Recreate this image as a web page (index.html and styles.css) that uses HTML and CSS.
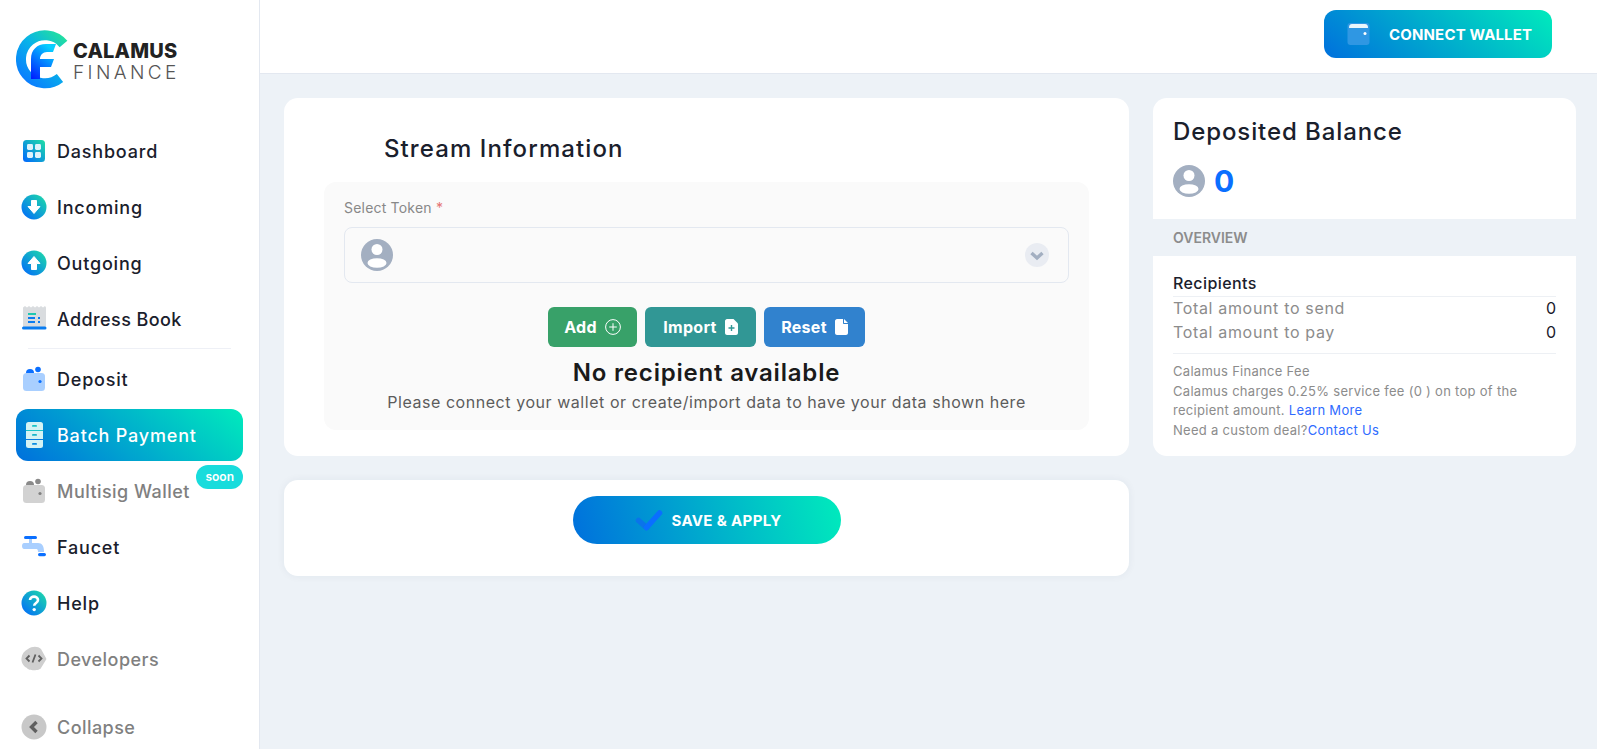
FILE: index.html
```html
<!DOCTYPE html>
<html lang="en">
<head>
    <meta charset="UTF-8">
    <meta name="viewport" content="width=device-width, initial-scale=1.0">
    <title>Calamus Finance - Batch Payment</title>
    <link rel="stylesheet" href="styles.css">
</head>
<body>
    <svg class="defs" width="0" height="0" aria-hidden="true">
        <defs>
            <linearGradient id="brand" x1="0" y1="1" x2="1" y2="0">
                <stop offset="0" stop-color="#0066ff"/>
                <stop offset="1" stop-color="#1fe0a5"/>
            </linearGradient>
            <linearGradient id="logoC" gradientUnits="userSpaceOnUse" x1="6" y1="50" x2="46" y2="6">
                <stop offset="0" stop-color="#0a7cff"/>
                <stop offset="0.55" stop-color="#08b4e8"/>
                <stop offset="1" stop-color="#22dfa0"/>
            </linearGradient>
            <linearGradient id="logoF" x1="0" y1="1" x2="0.6" y2="0">
                <stop offset="0" stop-color="#0018ff"/>
                <stop offset="1" stop-color="#06cfff"/>
            </linearGradient>
            <symbol id="avatar" viewBox="0 0 32 32">
                <circle cx="16" cy="16" r="16" fill="#a3afc1"/>
                <circle cx="16" cy="10.5" r="5.5" fill="#fff"/>
                <ellipse cx="16" cy="24" rx="9.5" ry="4.8" fill="#fff"/>
            </symbol>
        </defs>
    </svg>

    <div class="app">
        <aside class="sidebar">
            <div class="logo">
                <svg class="logo-mark" width="56" height="60" viewBox="0 0 56 60">
                    <path d="M47.5 15 A24 24 0 1 0 44 49" fill="none" stroke="url(#logoC)" stroke-width="10"/>
                    <path d="M15 50 V30 C15 21 21 15 30 15 H40 L37 23 H31 C27 23 24 26 24 30 H38 L35 38 H24 V50 Z" fill="url(#logoF)"/>
                </svg>
                <div class="logo-text">
                    <span class="logo-top">CALAMUS</span>
                    <span class="logo-bottom">FINANCE</span>
                </div>
            </div>

            <nav class="menu">
                <a class="menu-item">
                    <svg class="menu-icon" viewBox="0 0 26 26"><rect x="2" y="2" width="22" height="22" rx="3.5" fill="url(#brand)"/><rect x="6" y="6" width="6" height="6" rx="1.4" fill="#dff3fb"/><rect x="14" y="6" width="6" height="6" rx="1.4" fill="#dff3fb"/><rect x="6" y="14" width="6" height="6" rx="1.4" fill="#dff3fb"/><rect x="14" y="14" width="6" height="6" rx="1.4" fill="#dff3fb"/></svg>
                    <span>Dashboard</span>
                </a>
                <a class="menu-item">
                    <svg class="menu-icon" viewBox="0 0 26 26"><circle cx="13" cy="13" r="12.5" fill="url(#brand)"/><path d="M10.5 6.5 H15.5 V12.5 H19 L13 19.5 L7 12.5 H10.5 Z" fill="#fff" stroke="#fff" stroke-linejoin="round"/></svg>
                    <span>Incoming</span>
                </a>
                <a class="menu-item">
                    <svg class="menu-icon" viewBox="0 0 26 26"><circle cx="13" cy="13" r="12.5" fill="url(#brand)"/><path d="M10.5 19.5 H15.5 V13.5 H19 L13 6.5 L7 13.5 H10.5 Z" fill="#fff" stroke="#fff" stroke-linejoin="round"/></svg>
                    <span>Outgoing</span>
                </a>
                <a class="menu-item tight">
                    <svg class="menu-icon" viewBox="0 0 26 26"><path d="M2 1.5 L4 0 L6 1.5 L8 0 L10 1.5 L12 0 L14 1.5 L16 0 L18 1.5 L20 0 L22 1.5 L24 0 L25 1.5 V21 H2 Z" fill="#d9dcdf"/><rect x="1" y="20.5" width="24.5" height="3" rx="1.5" fill="#0a7cf0"/><rect x="7" y="7" width="8" height="2" fill="#1fc8b0"/><rect x="7" y="11" width="7" height="2" fill="#0a7cf0"/><rect x="7" y="15" width="7" height="2" fill="#0a7cf0"/><rect x="17" y="11" width="2" height="2" fill="#0a7cf0"/><rect x="17" y="15" width="2" height="2" fill="#0a7cf0"/></svg>
                    <span>Address Book</span>
                </a>
                <div class="menu-line"></div>
                <a class="menu-item">
                    <svg class="menu-icon" viewBox="0 0 26 26"><circle cx="9" cy="7" r="4" fill="#0a6fff"/><circle cx="17" cy="3.5" r="2.8" fill="#0a6fff"/><rect x="2" y="7" width="22" height="18" rx="3.5" fill="#a9cfff"/><circle cx="19" cy="15.5" r="1.6" fill="#0a6fff"/></svg>
                    <span>Deposit</span>
                </a>
                <a class="menu-item active">
                    <svg class="menu-icon" viewBox="0 0 26 26"><rect x="5" y="0" width="17" height="26" rx="2.5" fill="#d5f3f4"/><rect x="5" y="8" width="17" height="1" fill="#19c4c8"/><rect x="5" y="17" width="17" height="1" fill="#0a7ce0"/><rect x="11" y="3" width="5" height="1.8" rx="0.9" fill="#19c4c8"/><rect x="11" y="12" width="5" height="1.8" rx="0.9" fill="#19b4c8"/><rect x="11" y="21" width="5" height="1.8" rx="0.9" fill="#0a8ce0"/></svg>
                    <span>Batch Payment</span>
                </a>
                <a class="menu-item muted">
                    <svg class="menu-icon" viewBox="0 0 26 26"><circle cx="9" cy="7" r="4" fill="#8a8a8a"/><circle cx="17" cy="3.5" r="2.8" fill="#8a8a8a"/><rect x="2" y="7" width="22" height="18" rx="3.5" fill="#d2d2d2"/><circle cx="19" cy="15.5" r="1.6" fill="#808080"/></svg>
                    <span>Multisig Wallet</span>
                    <span class="badge">soon</span>
                </a>
                <a class="menu-item">
                    <svg class="menu-icon" viewBox="0 0 26 26"><rect x="3" y="2" width="13" height="3" rx="1.5" fill="#0a6fff"/><path d="M8 5 H11 V9 H17 C21 9 23 12 23 18 H17 C17 15 16 15 15 15 H3 C2 15 1 14 1 12 C1 10 2 9 3 9 H8 Z" fill="#a9cfff"/><rect x="17" y="19" width="8" height="3.2" rx="1.6" fill="#0a6fff"/></svg>
                    <span>Faucet</span>
                </a>
                <a class="menu-item">
                    <svg class="menu-icon" viewBox="0 0 26 26"><circle cx="13" cy="13" r="12.5" fill="url(#brand)"/><path d="M9 10 C9 5.5 17 5.5 17 10 C17 13 13.2 13 13.2 15.8" fill="none" stroke="#fff" stroke-width="2.6"/><circle cx="13.2" cy="19.6" r="1.7" fill="#fff"/></svg>
                    <span>Help</span>
                </a>
                <a class="menu-item muted">
                    <svg class="menu-icon" viewBox="0 0 26 26"><path d="M7 3 C11 0 17 0 20 3 L25.5 13 L20 22 C19 25 7 25 6 22 C2 20 0 16 0.5 12 C1 8 3 5 7 3 Z" fill="#cfcfcf"/><path d="M8.5 9.5 L5.5 12.5 L8.5 15.5 M17.5 9.5 L20.5 12.5 L17.5 15.5 M14.5 8.5 L11.5 16.5" fill="none" stroke="#5f5f5f" stroke-width="1.8"/></svg>
                    <span>Developers</span>
                </a>
                <a class="menu-item muted collapse">
                    <svg class="menu-icon" viewBox="0 0 26 26"><circle cx="13" cy="13" r="12.5" fill="#c8c8c8"/><path d="M15.5 8 L10.5 13 L15.5 18" fill="none" stroke="#5f5f5f" stroke-width="3.4"/></svg>
                    <span>Collapse</span>
                </a>
            </nav>
        </aside>

        <div class="main">
            <header class="topbar">
                <button class="grad-btn wallet-btn">
                    <svg width="24" height="24" viewBox="0 0 24 24"><rect x="0.5" y="1" width="22" height="22" rx="3" fill="#2f97e3"/><path d="M2 6 C2 3 3 2 5 2 H18 C20 2 21 3 21 6 Z" fill="#e9f6fb"/><circle cx="18" cy="11.5" r="1.5" fill="#fff"/></svg>
                    <span>CONNECT WALLET</span>
                </button>
            </header>

            <div class="content">
                <div class="left-col">
                    <section class="card stream-card">
                        <h2 class="stream-title">Stream Information</h2>
                        <div class="panel">
                            <label class="field-label">Select Token <em>*</em></label>
                            <div class="select-box">
                                <svg class="avatar" width="32" height="32"><use href="#avatar"/></svg>
                                <svg width="24" height="24" viewBox="0 0 24 24"><circle cx="12" cy="12" r="12" fill="#e9ecf2"/><path d="M6.5 10 L12 15 L17.5 10" fill="none" stroke="#a3afc1" stroke-width="3.4"/></svg>
                            </div>
                            <div class="actions">
                                <button class="btn btn-add">Add
                                    <svg width="16" height="16" viewBox="0 0 16 16"><circle cx="8" cy="8" r="7.4" fill="none" stroke="#fff" stroke-width="1"/><path d="M8 4.2 V11.8 M4.2 8 H11.8" stroke="#fff" stroke-width="1"/></svg>
                                </button>
                                <button class="btn btn-import">Import
                                    <svg width="13" height="16" viewBox="0 0 13 16"><path d="M2 0 H8.5 L13 4.5 V14 C13 15 12 16 11 16 H2 C1 16 0 15 0 14 V2 C0 1 1 0 2 0 Z" fill="#fff"/><path d="M6.5 6 V12 M3.5 9 H9.5" stroke="#319795" stroke-width="1.4"/></svg>
                                </button>
                                <button class="btn btn-reset">Reset
                                    <svg width="13" height="16" viewBox="0 0 13 16"><path d="M2 0 H8 V4 C8 4.6 8.4 5 9 5 H13 V14 C13 15 12 16 11 16 H2 C1 16 0 15 0 14 V2 C0 1 1 0 2 0 Z M9 0 L13 4 H9 Z" fill="#fff"/></svg>
                                </button>
                            </div>
                            <h3 class="empty-title">No recipient available</h3>
                            <p class="empty-text">Please connect your wallet or create/import data to have your data shown here</p>
                        </div>
                    </section>

                    <section class="card save-card">
                        <button class="grad-btn save-btn">
                            <svg width="28" height="22" viewBox="0 0 28 22"><path d="M3.5 11.5 L11.5 18.5" fill="none" stroke="#0a74ea" stroke-width="5.5" stroke-linecap="round"/><path d="M11.5 18.5 L24.5 4" fill="none" stroke="#0a6fff" stroke-width="5.5" stroke-linecap="round"/></svg>
                            <span>SAVE &amp; APPLY</span>
                        </button>
                    </section>
                </div>

                <aside class="card side-card">
                    <div class="balance">
                        <h2 class="balance-title">Deposited Balance</h2>
                        <div class="balance-row">
                            <svg width="32" height="32"><use href="#avatar"/></svg>
                            <span class="balance-value">0</span>
                        </div>
                    </div>
                    <div class="overview-band">OVERVIEW</div>
                    <div class="overview">
                        <div class="recipients">Recipients</div>
                        <div class="total-row"><span>Total amount to send</span><b>0</b></div>
                        <div class="total-row"><span>Total amount to pay</span><b>0</b></div>
                        <div class="fee">
                            <span>Calamus Finance Fee</span><br>
                            <span>Calamus charges 0.25% service fee (0 ) on top of the</span><br>
                            <span>recipient amount.</span> <a>Learn More</a><br>
                            <span>Need a custom deal?</span><a>Contact Us</a>
                        </div>
                    </div>
                </aside>
            </div>
        </div>
    </div>
</body>
</html>
```

FILE: styles.css
```css
* {
    box-sizing: border-box;
}
html, body {
    margin: 0;
    padding: 0;
    height: 100%;
    overflow: hidden;
}
body {
    font-family: Inter, "Open Sans", sans-serif;
    background: #edf2f7;
    color: #1a202c;
}
h2, h3, p {
    margin: 0;
}
button {
    font-family: inherit;
    border: none;
    cursor: pointer;
}
.defs {
    position: absolute;
}
.app {
    display: flex;
    height: 100vh;
}

/* sidebar */
.sidebar {
    width: 260px;
    flex-shrink: 0;
    background: #fff;
    border-right: 1px solid #e3e8f0;
    padding: 26px 16px 0;
    overflow: hidden;
}
.logo {
    display: flex;
    align-items: center;
    height: 66px;
    margin-bottom: 33px;
}
.logo-mark {
    flex-shrink: 0;
}
.logo-text {
    display: flex;
    flex-direction: column;
    margin-left: 1px;
    padding-top: 6px;
    line-height: 22px;
}
.logo-top {
    font-size: 20px;
    font-weight: 800;
    color: #222;
    letter-spacing: 0.2px;
}
.logo-bottom {
    font-size: 19px;
    font-weight: 300;
    color: #555;
    letter-spacing: 3.4px;
}
.menu {
    display: flex;
    flex-direction: column;
    gap: 4px;
}
.menu-item {
    position: relative;
    display: flex;
    align-items: center;
    flex-shrink: 0;
    height: 52px;
    padding-left: 5px;
    border-radius: 12px;
    font-size: 18px;
    font-weight: 450;
    letter-spacing: 0.8px;
}
.menu-icon {
    width: 26px;
    height: 26px;
    margin-right: 10px;
    flex-shrink: 0;
}
.menu-item.tight {
    letter-spacing: 0.4px;
}
.menu-item.active {
    background: linear-gradient(40deg, #0070dd, #00ebbc);
    color: #fff;
    font-weight: 500;
}
.menu-item.muted {
    color: #808080;
    font-weight: 500;
    letter-spacing: 0.45px;
}
.collapse {
    margin-top: 12px;
}
.menu-line {
    height: 1px;
    margin: -1px 12px 0 12px;
    background: #eef0f6;
}
.badge {
    position: absolute;
    top: 0;
    right: 0;
    height: 24px;
    padding: 0 9px;
    border-radius: 12px;
    background: #18dcdc;
    color: #fff;
    font-size: 12px;
    font-weight: 600;
    line-height: 23px;
    letter-spacing: 0;
}

/* top bar */
.main {
    flex: 1;
    min-width: 0;
}
.topbar {
    display: flex;
    justify-content: flex-end;
    height: 74px;
    padding: 10px 45px 0 0;
    background: #fff;
    border-bottom: 1px solid #e3e8f0;
}
.grad-btn {
    display: flex;
    align-items: center;
    height: 48px;
    color: #fff;
    font-size: 15px;
    font-weight: 700;
}
.wallet-btn {
    width: 228px;
    padding-left: 23px;
    gap: 18px;
    border-radius: 12px;
    background: linear-gradient(40deg, #0070dd, #00ebbc);
    letter-spacing: 0.15px;
}
.save-btn {
    width: 268px;
    padding-left: 62px;
    gap: 9px;
    border-radius: 24px;
    background: linear-gradient(75deg, #0070dd, #00ebbc);
    letter-spacing: 0.35px;
}

/* main cards */
.content {
    display: flex;
    align-items: flex-start;
    gap: 24px;
    padding: 24px 21px 0 24px;
}
.left-col {
    display: flex;
    flex-direction: column;
    gap: 24px;
    width: 845px;
    flex-shrink: 0;
}
.card {
    background: #fff;
    border-radius: 14px;
}
.stream-card {
    height: 358px;
    padding: 35px 40px 0;
}
.stream-title {
    padding-left: 60px;
    font-size: 24px;
    font-weight: 450;
    line-height: 32px;
    letter-spacing: 1.1px;
}
.panel {
    height: 248px;
    margin-top: 17px;
    padding: 15px 20px 0;
    background: #fafafa;
    border-radius: 12px;
    text-align: center;
}
.field-label {
    display: block;
    font-size: 14px;
    line-height: 22px;
    color: #888;
    text-align: left;
    letter-spacing: 0.2px;
}
.field-label em {
    font-style: normal;
    color: #e57373;
}
.select-box {
    display: flex;
    align-items: center;
    justify-content: space-between;
    height: 56px;
    margin-top: 8px;
    padding: 0 19px 0 16px;
    border: 1px solid #e3e8f0;
    border-radius: 8px;
}
.actions {
    display: flex;
    justify-content: center;
    gap: 8px;
    margin-top: 24px;
}
.btn {
    display: flex;
    align-items: center;
    justify-content: center;
    gap: 8px;
    height: 40px;
    border-radius: 6px;
    color: #fff;
    font-size: 16px;
    font-weight: 700;
    letter-spacing: 0.3px;
}
.btn-add {
    width: 89px;
    background: #38a169;
}
.btn-import {
    width: 111px;
    background: #319795;
}
.btn-reset {
    width: 101px;
    background: #3182ce;
}
.empty-title {
    margin-top: 8px;
    font-size: 24px;
    font-weight: 600;
    line-height: 36px;
    color: #1a1a1a;
    letter-spacing: 0.8px;
}
.empty-text {
    margin-top: -1px;
    font-size: 16px;
    line-height: 24px;
    color: #5c5c5c;
    letter-spacing: 0.55px;
}
.save-card {
    height: 96px;
    padding-top: 16px;
    box-shadow: 0 0 8px rgba(30, 50, 80, 0.06);
}
.save-card .save-btn {
    margin: 0 auto;
}

/* right card */
.side-card {
    width: 423px;
    height: 358px;
    overflow: hidden;
}
.balance {
    height: 121px;
    padding: 16px 20px 0;
}
.balance-title {
    font-size: 24px;
    font-weight: 450;
    line-height: 36px;
    letter-spacing: 0.9px;
}
.balance-row {
    display: flex;
    align-items: center;
    gap: 9px;
    margin-top: 15px;
}
.balance-value {
    font-size: 30px;
    font-weight: 700;
    line-height: 32px;
    color: #0a6fff;
}
.overview-band {
    height: 37px;
    padding-left: 20px;
    background: #edf2f7;
    color: #8c8c8c;
    font-size: 14px;
    font-weight: 600;
    line-height: 37px;
}
.overview {
    padding: 15px 20px 0;
}
.recipients {
    height: 26px;
    font-size: 16px;
    font-weight: 500;
    line-height: 24px;
    letter-spacing: 0.4px;
    border-bottom: 1px solid #edf0f4;
}
.total-row {
    display: flex;
    justify-content: space-between;
    height: 24px;
    font-size: 16px;
    line-height: 22px;
    color: #8c8c8c;
    letter-spacing: 0.66px;
}
.total-row b {
    font-weight: 400;
    color: #1a202c;
    letter-spacing: 0;
}
.fee {
    margin-top: 8px;
    padding-top: 8px;
    border-top: 1px solid #edf0f4;
    font-size: 13px;
    line-height: 19.5px;
    color: #8c8c8c;
    letter-spacing: 0.29px;
}
.fee a {
    color: #2f6bff;
}
```
